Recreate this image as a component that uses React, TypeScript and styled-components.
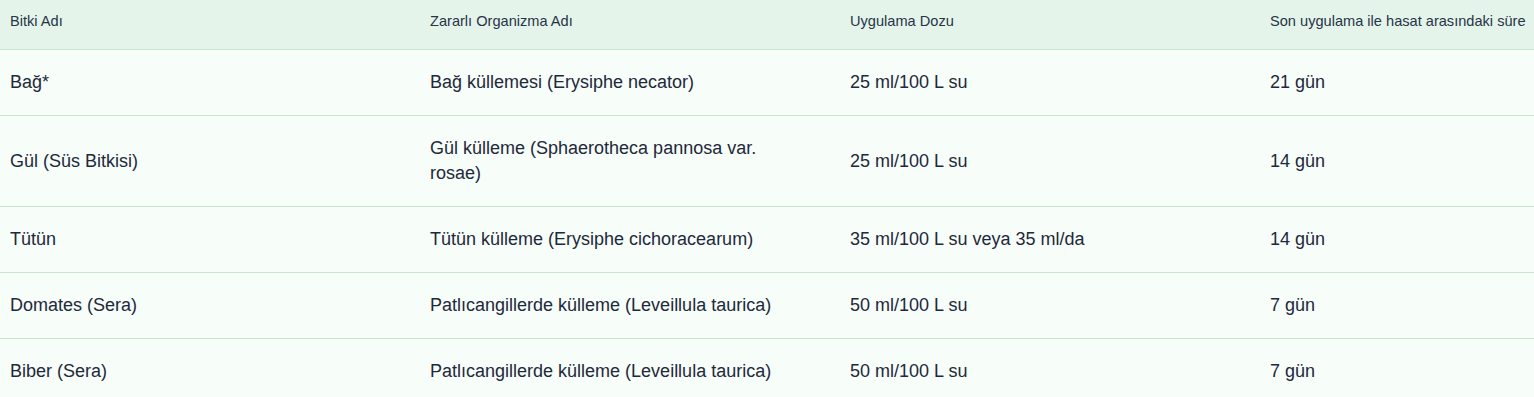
import React from 'react';
import styled, { createGlobalStyle } from 'styled-components';

type Row = {
  plant: string;
  pest: string;
  dose: string;
  wait: string;
};

const rows: Row[] = [
  { plant: 'Bağ*', pest: 'Bağ küllemesi (Erysiphe necator)', dose: '25 ml/100 L su', wait: '21 gün' },
  {
    plant: 'Gül (Süs Bitkisi)',
    pest: 'Gül külleme (Sphaerotheca pannosa var. rosae)',
    dose: '25 ml/100 L su',
    wait: '14 gün',
  },
  { plant: 'Tütün', pest: 'Tütün külleme (Erysiphe cichoracearum)', dose: '35 ml/100 L su veya 35 ml/da', wait: '14 gün' },
  { plant: 'Domates (Sera)', pest: 'Patlıcangillerde külleme (Leveillula taurica)', dose: '50 ml/100 L su', wait: '7 gün' },
  { plant: 'Biber (Sera)', pest: 'Patlıcangillerde külleme (Leveillula taurica)', dose: '50 ml/100 L su', wait: '7 gün' },
];

const headings = ['Bitki Adı', 'Zararlı Organizma Adı', 'Uygulama Dozu', 'Son uygulama ile hasat arasındaki süre'];

const App = () => {
  return (
    <>
      <GlobalStyle />
      <Wrapper>
        <Table>
          <colgroup>
            {headings.map((h) => (
              <Col key={h} />
            ))}
          </colgroup>
          <thead>
            <HeadRow>
              {headings.map((h) => (
                <HeadCell key={h}>{h}</HeadCell>
              ))}
            </HeadRow>
          </thead>
          <tbody>
            {rows.map((row) => (
              <BodyRow key={row.plant}>
                <Cell>{row.plant}</Cell>
                <Cell>{row.pest}</Cell>
                <Cell>{row.dose}</Cell>
                <Cell>{row.wait}</Cell>
              </BodyRow>
            ))}
          </tbody>
        </Table>
      </Wrapper>
    </>
  );
};

export default App;

const GlobalStyle = createGlobalStyle`
  html, body {
    margin: 0;
    padding: 0;
    overflow: hidden;
    background: #f7fdf9;
  }
`;

const Wrapper = styled.div`
  width: 100%;
  overflow: hidden;
  background: #f7fdf9;
`;

const Table = styled.table`
  border-collapse: collapse;
  table-layout: fixed;
  width: 1680px;
  font-family: 'Liberation Sans', Arial, sans-serif;
  color: #1e293b;
`;

const Col = styled.col`
  width: 420px;
`;

const HeadRow = styled.tr`
  background: #e5f4ea;
  border-bottom: 1px solid #c6e6cf;
`;

const HeadCell = styled.th`
  padding: 13px 10px 19px;
  font-size: 14.6px;
  line-height: 17px;
  font-weight: 400;
  text-align: left;
  color: #273447;
  white-space: nowrap;
`;

const BodyRow = styled.tr`
  border-bottom: 1px solid #c6e6cf;
`;

const Cell = styled.td`
  padding: 20px 36px 20px 10px;
  font-size: 18px;
  line-height: 25px;
  font-weight: 500;
  vertical-align: middle;
`;
